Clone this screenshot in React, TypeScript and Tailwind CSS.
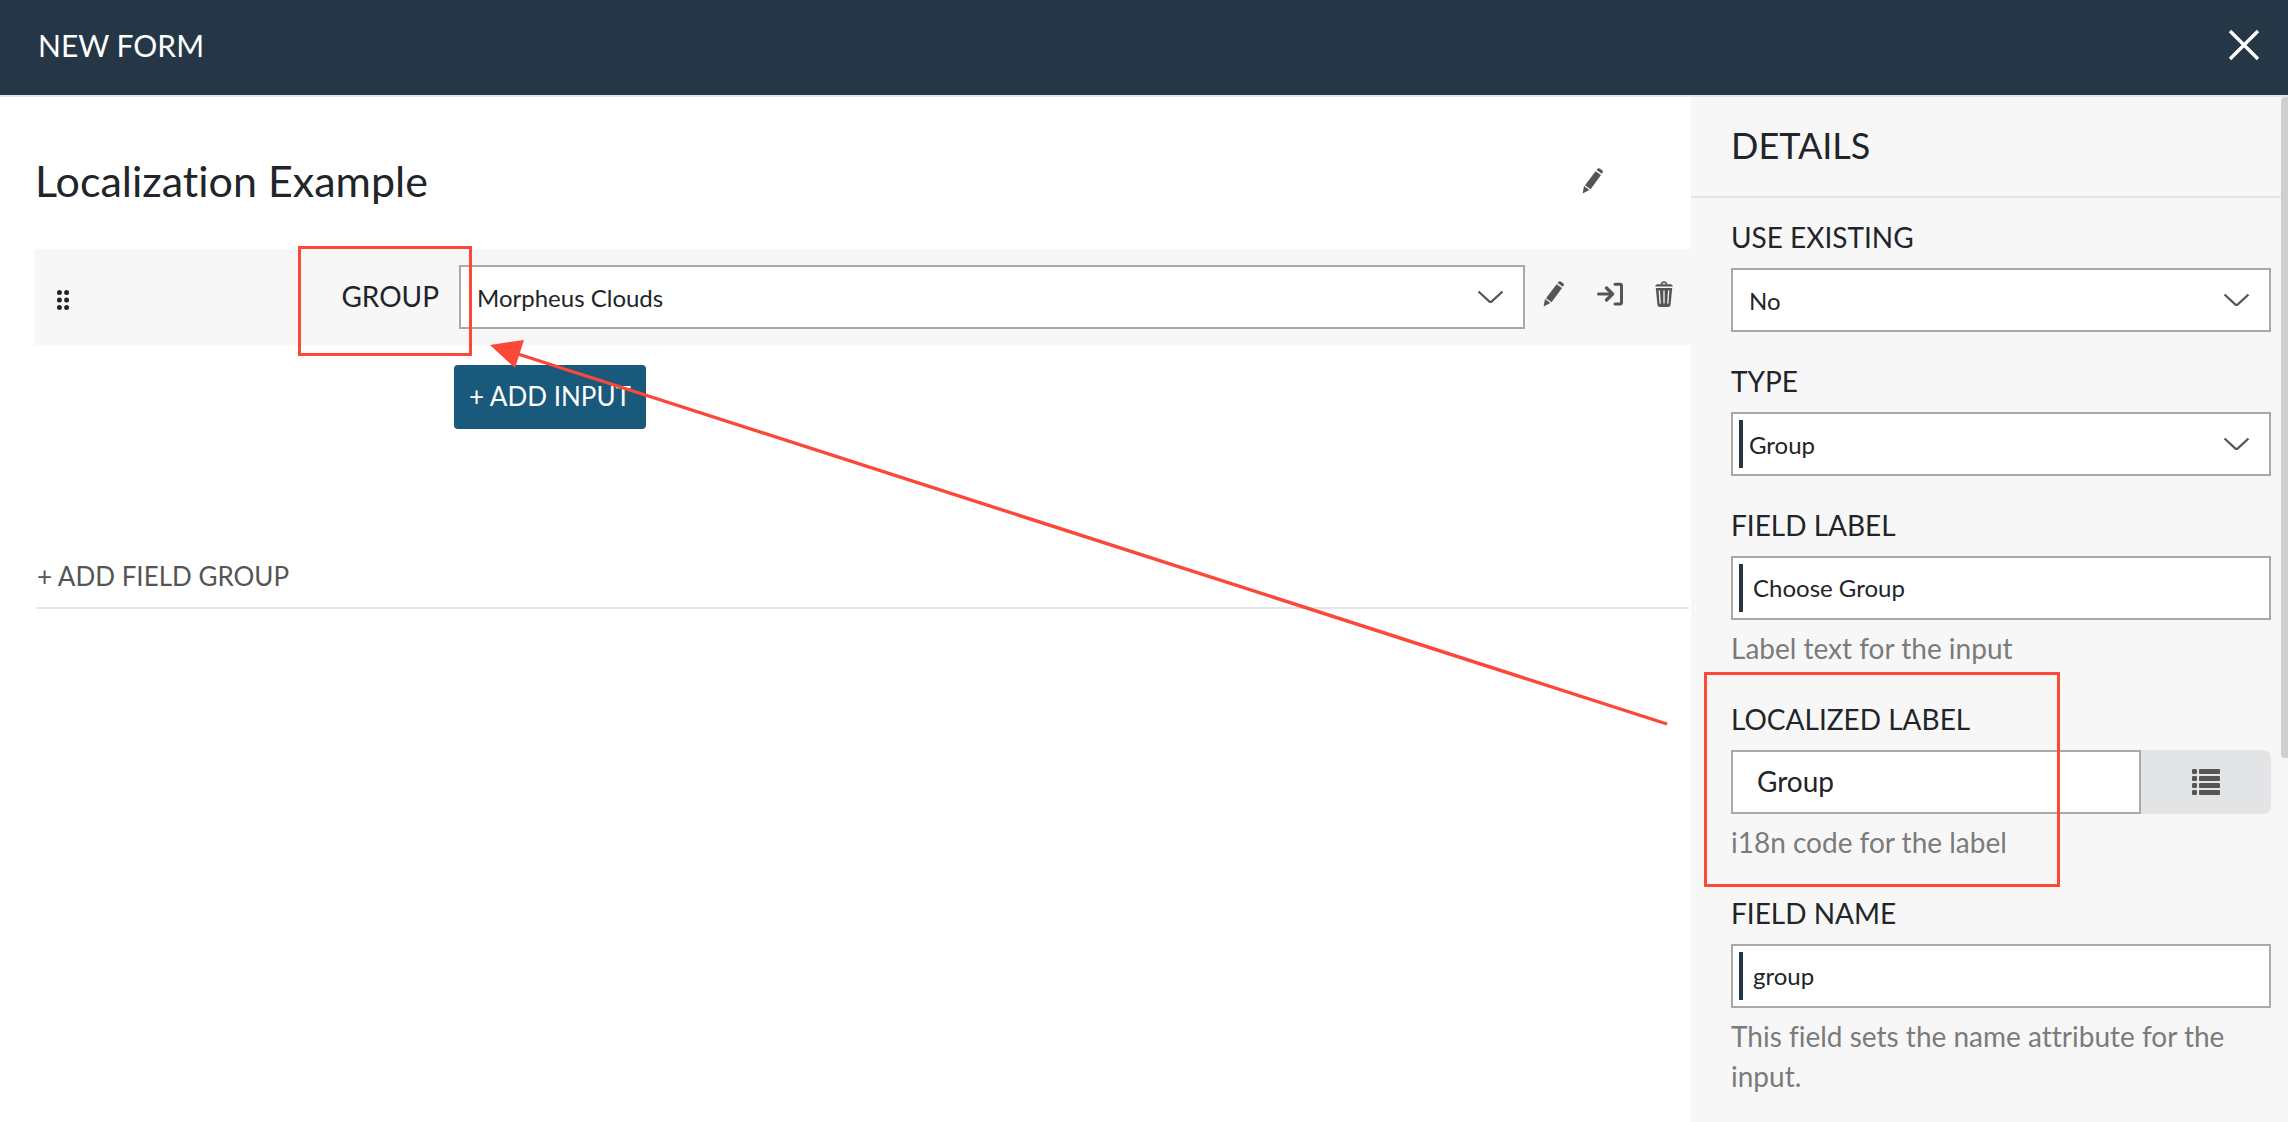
import React from 'react';

interface SelectBoxProps {
  id: string;
  options: string[];
  marked?: boolean;
}

interface TextBoxProps {
  id: string;
  value: string;
}

interface FieldProps {
  id: string;
  label: string;
  help?: string;
  children: React.ReactNode;
}

function PencilIcon() {
  return (
    <svg className="h-[26px] w-[22px]" viewBox="0 0 22 26" fill="currentColor" aria-hidden="true">
      <path d="M.6 25.4 2 18 7.4 22Z" />
      <path d="M3 17.2 13.6 3.2 19 7 8.6 21.2Z" />
      <path d="M14.6 1.9 15.5 .8Q16.6-.2 17.8.6L20.1 2.2Q21.3 3.1 20.6 4.4L19.8 5.7Z" />
    </svg>
  );
}

function LoginIcon() {
  return (
    <svg className="h-[26px] w-[26px]" viewBox="0 0 26 26" fill="none" stroke="currentColor" strokeLinecap="round" strokeLinejoin="round" aria-hidden="true">
      <path d="M1.5 13H15" strokeWidth="3" />
      <path d="M9.5 7 15.5 13 9.5 19" strokeWidth="3.4" />
      <path d="M18 3.2H23Q24.5 3.2 24.5 4.7V21.6Q24.5 23.1 23 23.1H18" strokeWidth="3" />
    </svg>
  );
}

function TrashIcon() {
  return (
    <svg className="h-[26px] w-[18px]" viewBox="0 0 18 26" aria-hidden="true">
      <path d="M6.4 3.6Q6.8 1 9 1T11.6 3.6" fill="none" stroke="currentColor" strokeWidth="1.6" />
      <path d="M.2 5.6Q.2 3.3 2.6 3.3H15.4Q17.8 3.3 17.8 5.6Z" fill="currentColor" />
      <path d="M.8 7H17.2L15.6 23.8Q15.3 26 13.2 26H4.8Q2.7 26 2.4 23.8Z" fill="currentColor" />
      <path d="M4.3 9.4 5.2 22.6M9 9.4V22.6M13.7 9.4 12.8 22.6" fill="none" stroke="#f7f7f7" strokeWidth="1.3" />
    </svg>
  );
}

function ListIcon() {
  return (
    <svg className="h-[26px] w-7" viewBox="0 0 28 26" fill="currentColor" aria-hidden="true">
      {[0, 7, 14, 21].map(y => (
        <g key={y}>
          <rect x="0" y={y} width="5" height="5" rx="1.2" />
          <rect x="7" y={y} width="21" height="5" rx="1" />
        </g>
      ))}
    </svg>
  );
}

function DragHandle() {
  return (
    <svg className="h-5 w-3" viewBox="0 0 12 20" fill="#212529" aria-hidden="true">
      {[2.6, 10, 17.4].map(y => (
        <g key={y}>
          <circle cx="2.4" cy={y} r="2.5" />
          <circle cx="9.6" cy={y} r="2.5" />
        </g>
      ))}
    </svg>
  );
}

// Dark bar on the left edge of a required input
function RequiredMark() {
  return <span className="pointer-events-none absolute inset-y-2 left-2 w-1 bg-[#253646]" />;
}

function SelectBox({ id, options, marked }: SelectBoxProps) {
  return (
    <div className="relative flex-1">
      <select
        id={id}
        className="block h-16 w-full appearance-none border-2 border-[#a9a9a9] bg-white pt-0.5 pr-14 pl-4 text-[24px] text-[#212529]"
      >
        {options.map(option => (
          <option key={option}>{option}</option>
        ))}
      </select>
      {marked && <RequiredMark />}
      <svg
        className="pointer-events-none absolute top-[25px] right-[21px] h-[14px] w-[27px]"
        viewBox="0 0 27 14"
        fill="none"
        stroke="#555"
        strokeWidth="2.2"
        aria-hidden="true"
      >
        <path d="M1.5 1.5 12.2 11.3Q13.5 12.4 14.8 11.3L25.5 1.5" />
      </svg>
    </div>
  );
}

function TextBox({ id, value }: TextBoxProps) {
  return (
    <div className="relative">
      <input
        id={id}
        type="text"
        defaultValue={value}
        className="block h-16 w-full border-2 border-[#a9a9a9] bg-white px-5 pb-0.5 text-[24px] text-[#212529]"
      />
      <RequiredMark />
    </div>
  );
}

function Field({ id, label, help, children }: FieldProps) {
  return (
    <div>
      <label htmlFor={id} className="mb-[11px] block text-[28px] leading-10 uppercase">
        {label}
      </label>
      {children}
      {help && <p className="pt-2 pb-0.5 text-[28px] leading-10 text-[#7b7b7b]">{help}</p>}
    </div>
  );
}

function FormCanvas() {
  return (
    <main className="relative min-w-0 flex-1 pl-[35px]">
      <div className="flex items-center justify-between pt-14 pr-[87px] pb-10">
        <h1 className="text-[43px] leading-14">Localization Example</h1>
        <button type="button" aria-label="Edit form name" className="text-[#555]">
          <PencilIcon />
        </button>
      </div>

      <div className="flex h-24 items-center bg-[#f7f7f7] pr-[18px] pl-[22px]">
        <div className="mr-5 flex w-[382px] items-center justify-between">
          <button type="button" aria-label="Reorder" className="pt-1.5">
            <DragHandle />
          </button>
          <label htmlFor="group-preview" className="pb-0.5 text-[28px] leading-10">GROUP</label>
        </div>
        <SelectBox id="group-preview" options={['Morpheus Clouds']} />
        <div className="ml-[18px] flex gap-8 pb-1.5 text-[#555]">
          <button type="button" aria-label="Edit input"><PencilIcon /></button>
          <button type="button" aria-label="Move input"><LoginIcon /></button>
          <button type="button" aria-label="Delete input"><TrashIcon /></button>
        </div>
      </div>

      <button type="button" className="mt-5 ml-[419px] block h-16 rounded bg-[#19597c] px-[15px] pb-0.5 text-[26px] text-white">
        + ADD INPUT
      </button>

      <div className="mx-0.5 mt-[127px] border-b-2 border-[#e5e5e5] pb-[11px]">
        <button type="button" className="block text-[26px] leading-10 text-[#555]">+ ADD FIELD GROUP</button>
      </div>

      {/* Callout around the GROUP label, with the arrow that leads to it */}
      <div className="pointer-events-none absolute top-[149px] left-[298px] h-[110px] w-[174px] border-3 border-[#fb4839]" />
      <svg
        className="pointer-events-none absolute top-[240px] left-[488px] h-[392px] w-[1184px]"
        viewBox="0 0 1184 392"
        aria-hidden="true"
      >
        <path d="M30 17 1179 387" fill="none" stroke="#fb4839" strokeWidth="3.4" />
        <path d="M2 8 36 3 27 31Z" fill="#fb4839" />
      </svg>
    </main>
  );
}

function DetailsPanel() {
  return (
    <aside className="flex w-[597px] shrink-0 bg-[#f7f7f7]">
      <div className="min-w-0 flex-1">
        <h2 className="border-b-2 border-[#e5e5e5] pt-[23px] pb-[26px] pl-10 text-[36px] leading-[50px]">DETAILS</h2>

        <form className="flex flex-col gap-[29px] pt-[19px] pr-[10px] pl-10">
          <Field id="use-existing" label="Use Existing">
            <SelectBox id="use-existing" options={['No', 'Yes']} />
          </Field>
          <Field id="type" label="Type">
            <SelectBox id="type" options={['Group']} marked />
          </Field>
          <Field id="field-label" label="Field Label" help="Label text for the input">
            <TextBox id="field-label" value="Choose Group" />
          </Field>

          <div className="relative">
            <Field id="localized-label" label="Localized Label" help="i18n code for the label">
              <div className="flex">
                <input
                  id="localized-label"
                  type="text"
                  defaultValue="Group"
                  className="h-16 min-w-0 flex-1 border-2 border-[#a9a9a9] bg-white px-6 pb-0.5 text-[28px]"
                />
                <button
                  type="button"
                  aria-label="Browse codes"
                  className="flex w-[130px] items-center justify-center rounded-r-lg bg-[#e2e4e6] text-[#555]"
                >
                  <ListIcon />
                </button>
              </div>
            </Field>
            <div className="pointer-events-none absolute -top-[27px] -left-[27px] h-[215px] w-[356px] border-3 border-[#fb4839]" />
          </div>

          <Field id="field-name" label="Field Name" help="This field sets the name attribute for the input.">
            <TextBox id="field-name" value="group" />
          </Field>
        </form>
      </div>

      {/* Scroll track */}
      <div className="w-[7px]">
        <div className="h-[64.5%] rounded-l bg-[#cfcfcf]" />
      </div>
    </aside>
  );
}

export default function App() {
  return (
    <div className="flex h-screen flex-col overflow-hidden bg-white font-['Lato','Open_Sans',sans-serif] text-[#212529] [font-variant-ligatures:none]">
      <header className="flex shrink-0 items-center justify-between border-b-2 border-[#e5e5e5] bg-[#253646] pt-5 pr-7 pb-[25px] pl-[38px] text-white">
        <span className="text-[30px] leading-[50px]">NEW FORM</span>
        <button type="button" aria-label="Close">
          <svg className="h-8 w-8" viewBox="0 0 32 32" fill="none" stroke="currentColor" strokeWidth="3.4" aria-hidden="true">
            <path d="M2 2 30 30M30 2 2 30" />
          </svg>
        </button>
      </header>
      <div className="flex min-h-0 flex-1">
        <FormCanvas />
        <DetailsPanel />
      </div>
    </div>
  );
}
